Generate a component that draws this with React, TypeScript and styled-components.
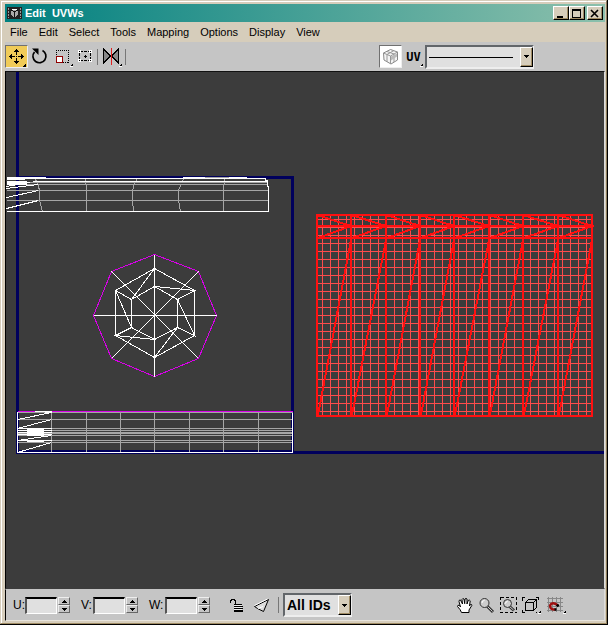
import React from "react";
import styled, { createGlobalStyle, css } from "styled-components";

const GlobalStyle = createGlobalStyle`
  * { box-sizing: border-box; }
  html, body { margin: 0; padding: 0; }
  body { background: #000; font-family: "Liberation Sans", Arial, sans-serif; font-size: 11px; color: #000; }
  button, input, select { font: inherit; color: inherit; margin: 0; padding: 0; border-radius: 0; }
`;

const Frame = styled.div`
  height: 100vh;
  min-height: 320px;
  border: solid;
  border-width: 0 1px 1px 0;
  border-color: #000;
`;

const Window = styled.main`
  height: 100%;
  display: flex;
  flex-direction: column;
  background: #d6cdbb;
  border: 1px solid #d6cdbb;
  border-right-color: #8c7c5c;
  border-bottom-color: #a08c64;
  box-shadow: inset 1px 1px 0 #fff;
  padding: 3px 1px 2px 4px;
`;

const TitleBar = styled.header`
  display: flex;
  align-items: center;
  height: 18px;
  padding: 0 2px;
  gap: 3px;
  background: linear-gradient(90deg, #008080, #8cc0ac);
`;

const Title = styled.h1`
  margin: 0;
  flex: 1;
  font-size: 11px;
  line-height: 18px;
  font-weight: bold;
  color: #fff;
`;

const WindowButtons = styled.div`
  display: flex;
`;

const raised = css`
  border: 1px solid;
  border-color: #fff #000 #000 #fff;
  box-shadow: inset -1px -1px 0 #a08c64;
  background: #d6cdbb;
`;

const WindowButton = styled.button<{ $apart?: boolean }>`
  ${raised}
  width: 16px;
  height: 14px;
  margin-left: ${(p) => (p.$apart ? 2 : 0)}px;
  display: grid;
  place-items: center;
`;

const MenuBar = styled.nav`
  display: flex;
  gap: 11px;
  height: 20px;
  padding: 0 5px;
  align-items: center;
`;

const MenuItem = styled.button`
  border: 0;
  background: none;
  line-height: 20px;
`;

const Bar = styled.div`
  display: flex;
  align-items: center;
  background: #c5c5c5;
`;

const ToolBar = styled(Bar)`
  height: 29px;
  padding-right: 71px;
`;

const ToolGroup = styled.div<{ $push?: boolean; $gap?: number }>`
  display: flex;
  align-items: center;
  gap: ${(p) => p.$gap ?? 0}px;
  margin-left: ${(p) => (p.$push ? "auto" : "0")};
`;

const ToolButton = styled.button<{ $tone?: string }>`
  position: relative;
  width: 23px;
  height: 23px;
  display: grid;
  place-items: center;
  background: ${(p) => p.$tone ?? "none"};
  border: 1px solid;
  border-color: ${(p) => (p.$tone ? "#707070 #eee #eee #707070" : "transparent")};
  svg { display: block; }
`;

const Separator = styled.span<{ $height: number }>`
  width: 1px;
  height: ${(p) => p.$height}px;
  background: #777;
`;

const Viewport = styled.section`
  flex: 1;
  min-height: 0;
  overflow: hidden;
  background: #3c3c3c;
  border: 1px solid;
  border-color: #111 #ddd #3c3c3c #000;
  svg { display: block; width: 100%; height: 100%; }
`;

const StatusBar = styled(Bar)`
  height: 32px;
  padding: 0 37px 0 7px;
  border: 1px solid;
  border-color: #c5c5c5 #ddd #e8e4dc #000;
`;

const Coordinate = styled.label`
  display: flex;
  align-items: center;
  margin-right: 11px;
`;

const CoordinateName = styled.span<{ $wide?: boolean }>`
  width: ${(p) => (p.$wide ? 16 : 12)}px;
  font-size: 12px;
`;

const CoordinateInput = styled.input`
  width: 32px;
  height: 17px;
  margin-right: 1px;
  background: #e0e0e0;
  border: solid;
  border-width: 2px 1px 1px 2px;
  border-color: #000 #fff #fff #555;
`;

const Spinner = styled.span`
  display: grid;
  width: 12px;
  height: 16px;
`;

const SpinButton = styled.button`
  border: 1px solid;
  border-color: #eee #666 #666 #eee;
  background: #c5c5c5;
  height: 8px;
  display: grid;
  place-items: center;
  svg { display: block; }
`;

const Picker = styled.div<{ $width: number; $height: number }>`
  position: relative;
  width: ${(p) => p.$width}px;
  height: ${(p) => p.$height}px;
`;

const PickerSelect = styled.select`
  appearance: none;
  width: 100%;
  height: 100%;
  padding: 0 16px 0 2px;
  background: #e0e0e0;
  border: 2px solid;
  border-color: #62666a #eee #eee #62666a;
  font-size: 14px;
  font-weight: bold;
`;

const PickerArrow = styled.span`
  ${raised}
  position: absolute;
  top: 2px;
  right: 1px;
  bottom: 2px;
  width: 13px;
  display: grid;
  place-items: center;
  pointer-events: none;
`;

const PickerLine = styled.span`
  position: absolute;
  top: 50%;
  left: 4px;
  right: 21px;
  height: 1px;
  background: #000;
  pointer-events: none;
`;

const DownArrow = () => (
  <svg width="5" height="3" shapeRendering="crispEdges"><path d="M0 0h5v1H0zM1 1h3v1H1zM2 2h1v1H2z" /></svg>
);
const UpArrow = () => (
  <svg width="5" height="3" shapeRendering="crispEdges"><path d="M2 0h1v1H2zM1 1h3v1H1zM0 2h5v1H0z" /></svg>
);

const Flyout = ({ x = 18, y = 18 }: { x?: number; y?: number }) => (
  <g shapeRendering="crispEdges">
    <path d={`M${x + 3} ${y - 1}v4h-4z`} fill="#fff" />
    <path d={`M${x + 1} ${y + 1}h1v-1h1v2h-2z`} fill="#000" />
  </g>
);

const AppIcon = () => (
  <svg width="15" height="12" viewBox="0 0 15 12" shapeRendering="crispEdges">
    <path d="M0 0h15v12H0z" fill="#222" />
    <path d="M1.500 1v10M13.500 1v10" stroke="#999" strokeDasharray="2 1" />
    <path d="M4 3l3.500-1.500L11 3v5L7.500 10.500 4 8z" fill="#aaa" />
    <path d="M4 3l3.500 2L11 3M7.500 5v5" stroke="#111" fill="none" />
    <path d="M5 2h5v1H5z" fill="#fff" />
  </svg>
);

const MoveIcon = () => (
  <svg width="21" height="21" viewBox="0 0 21 21" shapeRendering="crispEdges">
    <path d="M10 5h1v4h-1zM10 12h1v4h-1zM5 10h4v1H5zM12 10h4v1h-4z" />
    <path d="M10 3h1v1h1v1h1v1H8V5h1V4h1zM10 18h1v-1h1v-1h1v-1H8v1h1v1h1zM3 10h1V9h1V8h1v5H5v-1H4v-1H3zM18 10h-1V9h-1V8h-1v5h1v-1h1v-1h1zM10 10h1v1h-1z" />
    <path d="M20 17v4h-4z" />
  </svg>
);
const RotateIcon = () => (
  <svg width="21" height="21" viewBox="0 0 21 21">
    <path d="M13.500 4.500A6.500 6.500 0 1 1 5.500 6" fill="none" stroke="#000" strokeWidth="1.700" />
    <path d="M3 2.500h6.500V9z" />
  </svg>
);
const ScaleIcon = () => (
  <svg width="21" height="21" viewBox="0 0 21 21" shapeRendering="crispEdges">
    <path d="M4 4.500H17M16.500 4v13M4.500 4v6M11 16.500h6" fill="none" stroke="#000" strokeDasharray="1 1" />
    <path d="M4.500 10.500h6v6h-6z" fill="#fff" stroke="#900000" />
    <Flyout />
  </svg>
);
const FreeformIcon = () => (
  <svg width="21" height="21" viewBox="0 0 21 21" shapeRendering="crispEdges">
    <path d="M4.500 5.500h11v9h-11z" fill="none" stroke="#000" strokeDasharray="3 1" />
    <path d="M3 4h3v3H3zM14 4h3v3h-3zM3 13h3v3H3zM14 13h3v3h-3z" fill="#fff" />
    <path d="M4 5h1v1H4zM15 5h1v1h-1zM4 14h1v1H4zM15 14h1v1h-1zM10 9h1v3h-1zM9 10h3v1H9z" />
  </svg>
);
const MirrorIcon = () => (
  <svg width="21" height="21" viewBox="0 0 21 21" shapeRendering="crispEdges">
    <path d="M2.500 3v14l7-7zM17.500 3v14l-7-7z" fill="#888" stroke="#000" />
    <path d="M10 2v17" stroke="#e02020" />
    <Flyout />
  </svg>
);
const ShadedCubeIcon = () => (
  <svg width="21" height="21" viewBox="0 0 21 21">
    <path d="M3.500 7l7-3.500 7 2.500v8l-6.500 4-7-4z" fill="#f4f4f4" stroke="#888" />
    <path d="M3.500 7l7 3 7-4M10.500 10v8M7 5.500l7 2.500v8M14 4.500L7 8.500v7.500" stroke="#999" fill="none" />
    <path d="M11 10.500l6-3v3l-6 4z" fill="#bbb" />
  </svg>
);
const UVLabel = styled.span`
  font-family: "DejaVu Sans Mono", monospace;
  font-size: 12px;
  line-height: 14px;
  font-weight: bold;
`;
const CornerMark = styled.svg`
  position: absolute;
  right: 1px;
  bottom: 0;
`;

const LockIcon = () => (
  <svg width="17" height="17" viewBox="0 0 17 17" shapeRendering="crispEdges">
    <path d="M2.500 6V3.500h1v-1h3v1h1V8" fill="none" stroke="#000" />
    <path d="M6 7h8v1H6zM6 9h9v1H6zM6 11h9v1H6zM6 13h9v2H6z" />
    <path d="M6 8h8v1H6zM6 10h8v1H6zM6 12h8v1H6z" fill="#eee" />
  </svg>
);
const PlaneIcon = () => (
  <svg width="17" height="17" viewBox="0 0 17 17">
    <path d="M15.500 2.500L1.500 9.500l3 2 6 3z" fill="#ddd" stroke="#000" />
    <path d="M1.500 8.500l13-6.500M5 11.500l5-2" stroke="#fff" fill="none" />
  </svg>
);
const HandIcon = () => (
  <svg width="17" height="17" viewBox="0 0 17 17">
    <path d="M5.500 15.500L4 12.500 1.500 9.500q0-2 2-1L4.500 10 3 4.500q0-2 1.500-1.500L6.500 7 6 2.500Q6.500 1 8 2l.7 4.700L9 2q1-1.200 2 0v5l1.200-3.500q1.300-1 2 .3L13.500 9l1-1.500q1.500-.5 1.300 1L13 13v2.500z" fill="#fff" stroke="#000" />
  </svg>
);
const ZoomIcon = () => (
  <svg width="17" height="17" viewBox="0 0 17 17">
    <path d="M9 9l6 6" stroke="#333" strokeWidth="3" /><path d="M9 9l5.500 5.500" stroke="#ccc" />
    <circle cx="6.500" cy="6" r="4.500" fill="#ccc" stroke="#333" />
    <path d="M4 6q0-2.500 2.500-2.500" stroke="#fff" fill="none" />
  </svg>
);
const ZoomRegionIcon = () => (
  <svg width="17" height="17" viewBox="0 0 17 17">
    <path d="M.5.5h16v15H.5z" fill="none" stroke="#000" strokeDasharray="3 2" shapeRendering="crispEdges" />
    <path d="M9 9l5 4.500" stroke="#333" strokeWidth="3" /><path d="M9 9l4.500 4" stroke="#ccc" />
    <circle cx="7.500" cy="6.500" r="4" fill="#ccc" stroke="#333" />
    <path d="M5.500 6.500q0-2 2-2" stroke="#fff" fill="none" />
  </svg>
);
const ExtentsIcon = () => (
  <svg width="20" height="17" viewBox="0 0 20 17" shapeRendering="crispEdges">
    <path d="M3.500 5.500h8v8h-8zM3.500 5.500l3-3h8l-3 3M14.500 2.500v8l-3 3" fill="none" stroke="#000" />
    <path d="M.5 4V.5H3M14 .5h2.500V3M.5 13v2.500H3M14 15.500h1" fill="none" stroke="#000" />
    <Flyout x={16} y={14} />
  </svg>
);
const SnapIcon = () => (
  <svg width="20" height="17" viewBox="0 0 20 17">
    <path d="M1.500 0v15M5.500 0v15M9.500 0v15M13.500 0v15M0 1.500h16M0 5.500h16M0 9.500h16M0 13.500h16" stroke="#888" shapeRendering="crispEdges" />
    <path d="M8.500 12.500Q3 13 3 8.500 5 4 11 8.500" fill="none" stroke="#a01010" strokeWidth="2.400" />
    <path d="M7.500 12.500h2M10 7.500l1.500 2" stroke="#000" strokeWidth="2.400" />
    <Flyout x={16} y={14} />
  </svg>
);

const seamColumns = [317, 351, 386, 420, 454, 489, 523, 558, 592];
const gridColumns = Array.from({ length: 34 }, (_, i) => 322 + i * 8);
const gridRows = Array.from({ length: 25 }, (_, i) => 219 + i * 8);
const stripColumns = [51, 86, 120, 154, 189, 223, 258];

const SelectedMesh = () => (
  <g fill="none">
    <path
      stroke="#ff4c4c"
      d={gridColumns.map((x) => `M${x}.5 215V416`).join("") + gridRows.map((y) => `M317 ${y}.5H592`).join("")}
    />
    <path
      stroke="#ff1010"
      strokeWidth="2"
      d={
        seamColumns.map((x) => `M${x} 214V417`).join("") +
        "M316 215H593M316 226H593M316 238H593M316 416H593" +
        seamColumns
          .slice(0, -1)
          .map((x, i) => `M${x} 215L${seamColumns[i + 1]} 226L${x + 1} 238M${x + 1} 415L${seamColumns[i + 1]} 240`)
          .join("")
      }
    />
  </g>
);

const CapMesh = () => (
  <g fill="none" stroke="#fff" transform="translate(.5 .5)">
    <path stroke="#d800e8" d="M154 254L198 271L216 315L198 358L154 376L111 358L93 315L111 271Z" />
    <path d="M154 254V376M93 315H216M111 271L198 358M198 271L111 358" />
    <path d="M154 268L194 290V335L154 357L115 335V290Z" />
    <path d="M154 286L177 299V327L154 339L131 327V299Z" />
    <path d="M154 268L131 299L115 290L131 327L115 335L154 339M154 286L194 290L177 299L194 335L177 327L154 357" />
  </g>
);

const TopStrip = () => (
  <g fill="none" transform="translate(.5 .5)">
    <path
      stroke="#a6a6a6"
      d="M6 182H267M6 184H267M6 190H268M6 200H268M34 178L37 182L39 190V200L42 211M85 179L86 188V211M137 178L134 183L132 190V200L133 211M183 178L181 183L178 190V200L180 211M224 178L223 190V211"
    />
    <path stroke="#a6a6a6" d="M204 177H228" />
    <path stroke="#fff" d="M6 177H45M6 178H265V180H267V186H268V211H6M32 181H267M182 177H204M228 177H246" />
    <path stroke="#fff" d="M6 179H24M6 188L38 184M6 197L38 190M6 208L38 200M6 186L30 182" />
    <path fill="#fff" d="M6 180H26V184H6Z" />
  </g>
);

const BottomStrip = () => (
  <g fill="none" transform="translate(.5 .5)">
    <path
      stroke="#a6a6a6"
      d={"M17 412H292M17 419H292M17 428H292M17 430H292M17 432H292M17 433H292M17 435H292M17 440H292M17 442H292" + stripColumns.map((x) => `M${x} 411V451`).join("")}
    />
    <path stroke="#d800e8" d="M17 411H292" />
    <path stroke="#fff" d="M17 411V452H292V412M34 411H51M44 412H51M17 419L51 412M17 428L51 419M17 440L51 435M17 452L51 442M17 428H51M17 430H51M17 432H51M17 434H51M17 440H51" />
    <path fill="#fff" d="M26 428H43V435H26ZM26 440H43V441H26Z" />
  </g>
);

const UVCanvas = () => (
  <svg viewBox="6 72 598 516" preserveAspectRatio="xMinYMin slice" shapeRendering="crispEdges" role="img" aria-label="UV layout">
    <path d="M17.500 72V452.500H604M16 177.500H292.500V454" fill="none" stroke="#00005c" strokeWidth="3" />
    <path d="M16 450.500H294" stroke="#00005c" />
    <TopStrip />
    <CapMesh />
    <BottomStrip />
    <SelectedMesh />
  </svg>
);

const StatusTools = styled.div`
  display: flex;
  align-items: center;
  margin-left: auto;
  gap: 5px;
`;

const IconButton = styled.button`
  border: 0;
  background: none;
  svg { display: block; }
`;

const LockTools = styled.div`
  display: flex;
  align-items: center;
  gap: 8px;
  margin: 0 4px 0 7px;
`;

const menus = ["File", "Edit", "Select", "Tools", "Mapping", "Options", "Display", "View"];

export default function App() {
  return (
    <Frame>
      <GlobalStyle />
      <Window>
        <TitleBar>
          <AppIcon />
          <Title>Edit&nbsp; UVWs</Title>
          <WindowButtons>
            <WindowButton aria-label="Minimize">
              <svg width="10" height="9"><path d="M1 7h6v2H1z" /></svg>
            </WindowButton>
            <WindowButton aria-label="Maximize">
              <svg width="10" height="9" shapeRendering="crispEdges"><path d="M0 0h9v9H0zM1 2v6h7V2z" fillRule="evenodd" /></svg>
            </WindowButton>
            <WindowButton aria-label="Close" $apart>
              <svg width="10" height="9"><path d="M1 1l7 7M8 1L1 8" stroke="#000" strokeWidth="1.600" /></svg>
            </WindowButton>
          </WindowButtons>
        </TitleBar>
        <MenuBar>
          {menus.map((name) => <MenuItem key={name}>{name}</MenuItem>)}
        </MenuBar>
        <ToolBar>
          <ToolGroup>
            <ToolButton aria-label="Move" $tone="#f0cb58"><MoveIcon /></ToolButton>
            <ToolButton aria-label="Rotate"><RotateIcon /></ToolButton>
            <ToolButton aria-label="Scale"><ScaleIcon /></ToolButton>
            <ToolButton aria-label="Freeform mode"><FreeformIcon /></ToolButton>
          </ToolGroup>
          <ToolGroup $gap={2}>
            <Separator $height={16} />
            <ToolButton aria-label="Mirror"><MirrorIcon /></ToolButton>
            <Separator $height={16} />
          </ToolGroup>
          <ToolGroup $push>
            <ToolButton aria-label="Show map" $tone="#fff"><ShadedCubeIcon /></ToolButton>
            <ToolButton aria-label="UV space">
              <UVLabel>UV</UVLabel>
              <CornerMark width="3" height="4" viewBox="18 17 3 4"><Flyout /></CornerMark>
            </ToolButton>
            <Picker $width={109} $height={24}>
              <PickerSelect aria-label="Background texture"><option /></PickerSelect>
              <PickerLine />
              <PickerArrow><DownArrow /></PickerArrow>
            </Picker>
          </ToolGroup>
        </ToolBar>
        <Viewport><UVCanvas /></Viewport>
        <StatusBar>
          {["U", "V", "W"].map((axis) => (
            <Coordinate key={axis}>
              <CoordinateName $wide={axis === "W"}>{axis}:</CoordinateName>
              <CoordinateInput type="text" />
              <Spinner>
                <SpinButton type="button" aria-label={`Increase ${axis}`}><UpArrow /></SpinButton>
                <SpinButton type="button" aria-label={`Decrease ${axis}`}><DownArrow /></SpinButton>
              </Spinner>
            </Coordinate>
          ))}
          <LockTools>
            <IconButton aria-label="Lock selection"><LockIcon /></IconButton>
            <IconButton aria-label="Filter selected faces"><PlaneIcon /></IconButton>
            <Separator $height={16} />
          </LockTools>
          <Picker $width={69} $height={24}>
            <PickerSelect aria-label="Material IDs"><option>All IDs</option></PickerSelect>
            <PickerArrow><DownArrow /></PickerArrow>
          </Picker>
          <StatusTools>
            <IconButton aria-label="Pan"><HandIcon /></IconButton>
            <IconButton aria-label="Zoom"><ZoomIcon /></IconButton>
            <IconButton aria-label="Zoom region"><ZoomRegionIcon /></IconButton>
            <IconButton aria-label="Zoom extents"><ExtentsIcon /></IconButton>
            <IconButton aria-label="Grid snap"><SnapIcon /></IconButton>
          </StatusTools>
        </StatusBar>
      </Window>
    </Frame>
  );
}
